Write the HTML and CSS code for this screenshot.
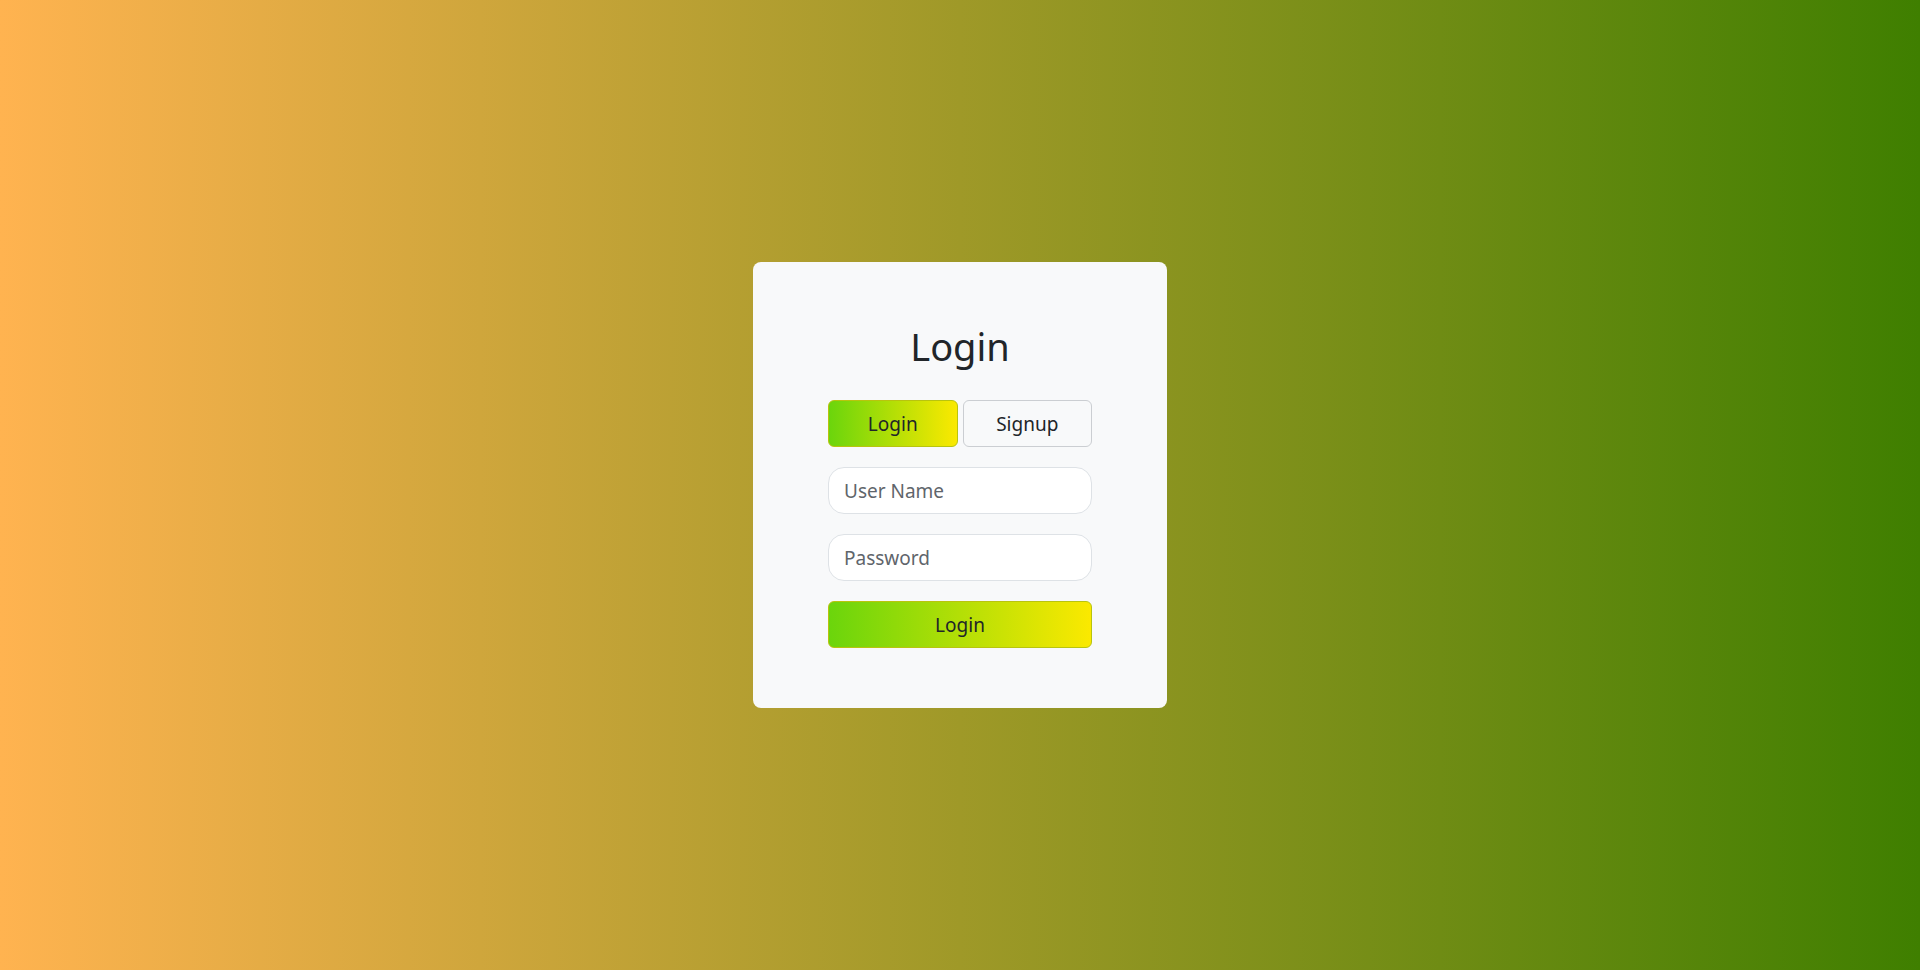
FILE: index.html
```html
<!DOCTYPE html>
<html lang="en">
<head>
<meta charset="utf-8">
<title>Login</title>
<link rel="stylesheet" href="styles.css">
</head>
<body>
<main class="page">
  <section class="card">
    <h1 class="title">Login</h1>
    <div class="tabs">
      <button class="btn btn-grad" type="button">Login</button>
      <button class="btn btn-light" type="button">Signup</button>
    </div>
    <form class="form">
      <input class="field" type="text" placeholder="User Name">
      <input class="field" type="password" placeholder="Password">
      <button class="btn btn-grad btn-block" type="button">Login</button>
    </form>
  </section>
</main>
</body>
</html>
```
FILE: styles.css
```css
* { box-sizing: border-box; }
html, body { margin: 0; height: 100%; }
body {
  font-family: "Noto Sans", "Open Sans", sans-serif;
  color: #212529;
  background: linear-gradient(to right, #ffb350, #3f7f00);
}
.page {
  height: 100%;
  display: flex;
  align-items: center;
  justify-content: center;
}
.card {
  width: 414px;
  background: #f8f9fa;
  border-radius: 8px;
  padding: 60px 75px;
  display: flex;
  flex-direction: column;
}
.title {
  margin: 0 0 30px;
  font-size: 38px;
  font-weight: 400;
  line-height: 48px;
  text-align: center;
}
.tabs {
  display: grid;
  grid-template-columns: 1fr 1fr;
  gap: 5px;
}
.form {
  margin: 20px 0 0;
  display: flex;
  flex-direction: column;
  gap: 20px;
}
.btn {
  height: 47px;
  font-family: inherit;
  font-size: 19px;
  color: #212529;
  border-radius: 6px;
  padding: 0 16px;
  cursor: pointer;
}
.btn-grad {
  background: linear-gradient(to right, #6bd50c, #fbe900);
  border: 1px solid #b9c40e;
}
.btn-light {
  background: #f8f9fa;
  border: 1px solid #cbced2;
}
.field {
  height: 47px;
  width: 100%;
  font-family: inherit;
  font-size: 19px;
  padding: 0 15px;
  background: #fff;
  border: 1px solid #dee2e6;
  border-radius: 16px;
  color: #212529;
}
.field::placeholder { color: #5f656b; }
```
